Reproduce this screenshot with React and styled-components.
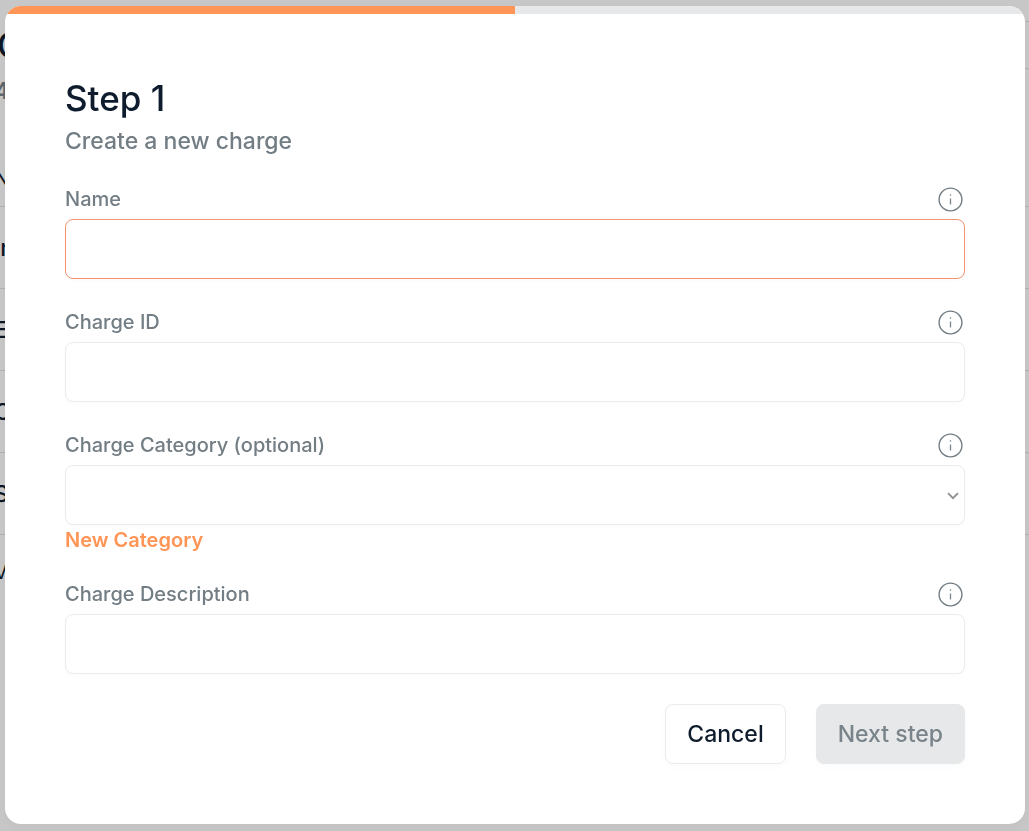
import React, { useState } from "react";
import styled, { createGlobalStyle } from "styled-components";

const backgroundRows = ["In", "E", "C", "S"];

const InfoIcon = () => (
    <svg width="25" height="25" viewBox="0 0 25 25" fill="none">
        <circle cx="12.5" cy="12.5" r="11.4" stroke="#727d84" strokeWidth="1.4" />
        <path d="M12.5 11.5v6" stroke="#79838a" strokeWidth="1.3" />
        <circle cx="12.5" cy="8" r="0.8" fill="#79838a" />
    </svg>
);

const Field = ({ id, label, children }) => (
    <FieldGroup>
        <LabelRow>
            <label htmlFor={id}>{label}</label>
            <InfoButton type="button" aria-label={`About ${label}`}>
                <InfoIcon />
            </InfoButton>
        </LabelRow>
        {children}
    </FieldGroup>
);

const App = () => {
    const [values, setValues] = useState({
        name: "",
        chargeId: "",
        category: "",
        description: "",
    });
    const step = 1;
    const totalSteps = 2;

    const updateValue = (e) => {
        setValues({ ...values, [e.target.name]: e.target.value });
    };

    return (
        <>
            <GlobalStyle />
            {/* list page under the dialog */}
            <Page aria-hidden="true">
                <PageHeader>
                    <div>
                        <PageTitle>C</PageTitle>
                        <PageCount>4</PageCount>
                    </div>
                    <HeaderAction />
                </PageHeader>
                <ChargeTable>
                    <thead>
                        <tr>
                            <th>N</th>
                        </tr>
                    </thead>
                    <tbody>
                        {backgroundRows.map((row) => (
                            <tr key={row}>
                                <td>{row}</td>
                            </tr>
                        ))}
                    </tbody>
                </ChargeTable>
                <PageFooter>V</PageFooter>
            </Page>

            <Overlay>
                <Modal role="dialog" aria-labelledby="step-title">
                    <ProgressTrack>
                        <ProgressFill style={{ width: `${(step / totalSteps) * 100}%` }} />
                    </ProgressTrack>
                    <Form onSubmit={(e) => e.preventDefault()}>
                        <header>
                            <Title id="step-title">Step {step}</Title>
                            <Subtitle>Create a new charge</Subtitle>
                        </header>
                        <Field id="name" label="Name">
                            <TextInput
                                $active
                                type="text"
                                id="name"
                                name="name"
                                value={values.name}
                                onChange={updateValue}
                            />
                        </Field>
                        <Field id="chargeId" label="Charge ID">
                            <TextInput
                                type="text"
                                id="chargeId"
                                name="chargeId"
                                value={values.chargeId}
                                onChange={updateValue}
                            />
                        </Field>
                        <Field id="category" label="Charge Category (optional)">
                            <SelectWrap>
                                <Select
                                    id="category"
                                    name="category"
                                    value={values.category}
                                    onChange={updateValue}
                                >
                                    <option value=""></option>
                                </Select>
                                <svg width="12" height="8" viewBox="0 0 12 8" fill="none">
                                    <path d="M1 1.2l5 5 5-5" stroke="#8c8f92" strokeWidth="1.8" />
                                </svg>
                            </SelectWrap>
                            <LinkButton type="button">New Category</LinkButton>
                        </Field>
                        <Field id="description" label="Charge Description">
                            <TextInput
                                type="text"
                                id="description"
                                name="description"
                                value={values.description}
                                onChange={updateValue}
                            />
                        </Field>
                        <Actions>
                            <Button type="button">Cancel</Button>
                            <Button type="submit" disabled>
                                Next step
                            </Button>
                        </Actions>
                    </Form>
                </Modal>
            </Overlay>
        </>
    );
};

const GlobalStyle = createGlobalStyle`
    *, *::before, *::after {
        box-sizing: border-box;
    }
    body {
        margin: 0;
        background: #fff;
        color: #0f1c2e;
        font-family: Inter, "Liberation Sans", sans-serif;
        overflow: hidden;
    }
    h1, h2, p {
        margin: 0;
    }
    button, input, select {
        font-family: inherit;
    }
`;

const Page = styled.main`
    margin-left: -6px;
    min-height: 100vh;
`;

const PageHeader = styled.div`
    display: flex;
    justify-content: space-between;
    height: 149px;
    padding-top: 21px;
`;

const PageTitle = styled.h1`
    padding-left: 3px;
    font-size: 35px;
    font-weight: 500;
    line-height: 48px;
`;

const PageCount = styled.p`
    font-size: 23px;
    font-weight: 600;
    line-height: 44px;
    color: #79838a;
`;

const HeaderAction = styled.div`
    width: 200px;
    height: 48px;
    border: solid #e0e2e4;
    border-width: 1px 0;
`;

const ChargeTable = styled.table`
    width: 100%;
    border-collapse: collapse;
    text-align: left;
    th,
    td {
        height: 82px;
        padding: 2px 0 0;
        font-size: 23px;
        font-weight: 500;
        border-bottom: 1px solid #e0e2e4;
    }
    th {
        height: 57px;
        font-size: 20px;
        font-weight: 400;
    }
`;

const PageFooter = styled.p`
    font-size: 20px;
    line-height: 74px;
`;

const Overlay = styled.div`
    position: fixed;
    inset: 0;
    display: flex;
    align-items: flex-start;
    justify-content: center;
    padding: 6px 4px 7px 5px;
    background: rgba(0, 0, 0, 0.22);
    overflow: auto;
`;

const Modal = styled.section`
    width: 100%;
    max-width: 1020px;
    background: #fff;
    border-radius: 16px;
    overflow: hidden;
    box-shadow: 0 4px 16px rgba(0, 0, 0, 0.04);
`;

const ProgressTrack = styled.div`
    height: 8px;
    background: #e6e8e9;
`;

const ProgressFill = styled.div`
    height: 100%;
    background: #ff9557;
`;

const Form = styled.form`
    display: flex;
    flex-direction: column;
    gap: 30px;
    padding: 60px;
`;

const Title = styled.h2`
    margin-bottom: 4px;
    font-size: 35px;
    font-weight: 500;
    line-height: 48px;
`;

const Subtitle = styled.p`
    font-size: 23px;
    font-weight: 500;
    line-height: 30px;
    color: #727d84;
`;

const FieldGroup = styled.div`
    display: flex;
    flex-direction: column;
`;

const LabelRow = styled.div`
    display: flex;
    align-items: center;
    justify-content: space-between;
    height: 26px;
    margin-bottom: 7px;
    padding-right: 2px;
    label {
        font-size: 20px;
        font-weight: 500;
        color: #727d84;
    }
`;

const InfoButton = styled.button`
    display: flex;
    padding: 0;
    border: none;
    background: none;
    cursor: pointer;
`;

const TextInput = styled.input`
    width: 100%;
    height: 60px;
    padding: 0 20px;
    border: 1px solid ${(props) => (props.$active ? "#f59273" : "#e8ecee")};
    border-radius: 8px;
    background: #fff;
    color: inherit;
    font-size: 20px;
    box-shadow: 0 2px 4px rgba(15, 28, 46, 0.02);
    outline: none;
`;

const SelectWrap = styled.div`
    position: relative;
    svg {
        position: absolute;
        top: 27px;
        right: 6px;
        pointer-events: none;
    }
`;

const Select = styled(TextInput).attrs({ as: "select" })`
    display: block;
    appearance: none;
`;

const LinkButton = styled.button`
    align-self: flex-start;
    margin-top: 4px;
    padding: 0;
    border: none;
    background: none;
    color: #ff9557;
    font-size: 20px;
    font-weight: 600;
    line-height: 22px;
    cursor: pointer;
`;

const Actions = styled.div`
    display: flex;
    justify-content: flex-end;
    gap: 30px;
`;

const Button = styled.button`
    height: 60px;
    padding: 0 21px;
    border: 1px solid #e8ecee;
    border-radius: 8px;
    background: #fff;
    color: #0f1c2e;
    font-size: 23px;
    font-weight: 500;
    box-shadow: 0 3px 8px rgba(15, 28, 46, 0.02);
    cursor: pointer;
    &:disabled {
        border-color: #e6e8e9;
        background: #e6e8e9;
        color: #79838a;
        cursor: default;
    }
`;

export default App;
